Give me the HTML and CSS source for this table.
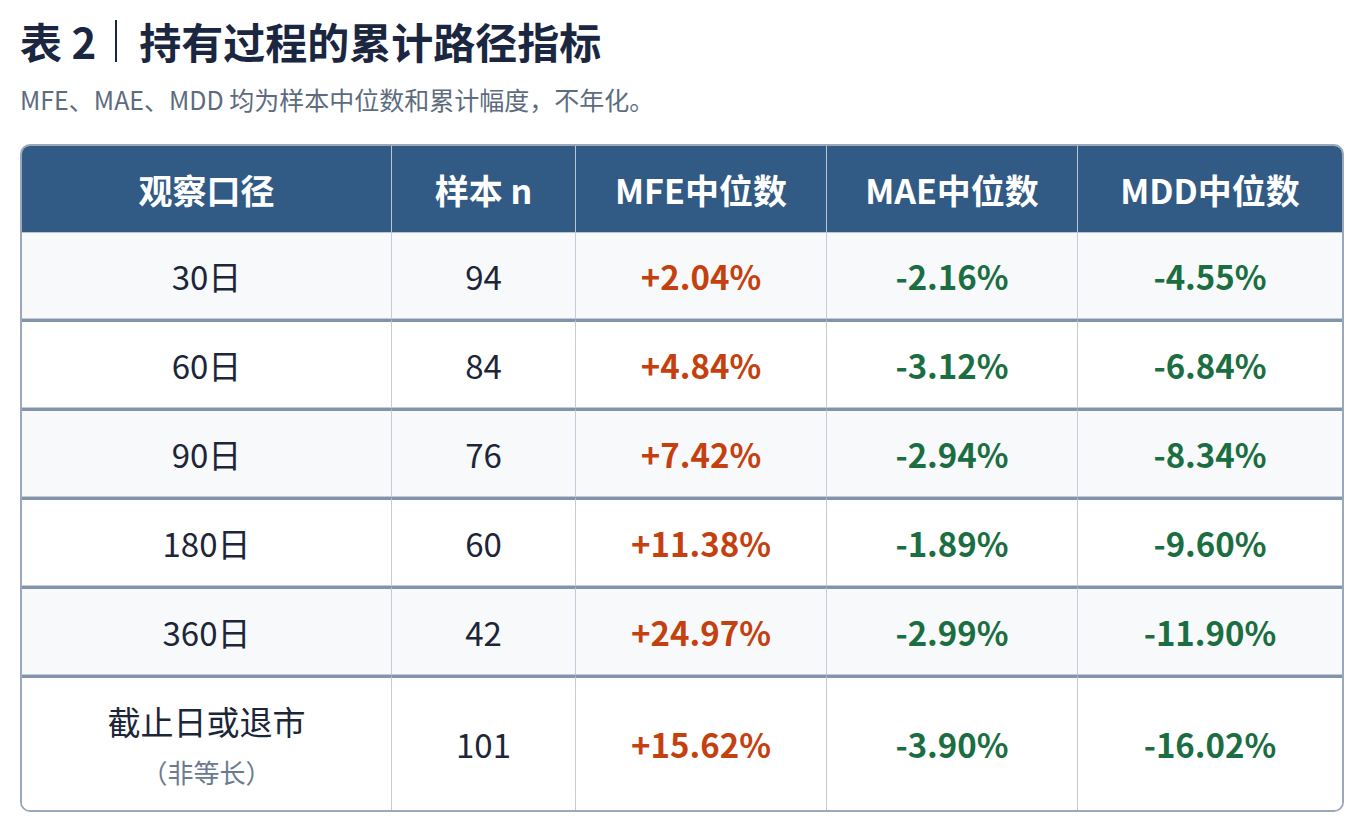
FILE: index.html
```html
<!DOCTYPE html>
<html lang="zh-CN">
<head>
<meta charset="utf-8">
<title>表 2｜持有过程的累计路径指标</title>
<link rel="stylesheet" href="styles.css">
</head>
<body>
<main class="page">
  <h1 class="title">表 2<span class="sep"></span>持有过程的累计路径指标</h1>
  <p class="subtitle">MFE、MAE、MDD 均为样本中位数和累计幅度，不年化。</p>
  <div class="table-wrap">
    <table class="data">
      <colgroup>
        <col class="c1"><col class="c2"><col class="c3"><col class="c4"><col class="c5">
      </colgroup>
      <thead>
        <tr><th>观察口径</th><th>样本 n</th><th>MFE中位数</th><th>MAE中位数</th><th>MDD中位数</th></tr>
      </thead>
      <tbody>
        <tr class="odd"><td>30日</td><td>94</td><td class="pos">+2.04%</td><td class="neg">-2.16%</td><td class="neg">-4.55%</td></tr>
        <tr><td>60日</td><td>84</td><td class="pos">+4.84%</td><td class="neg">-3.12%</td><td class="neg">-6.84%</td></tr>
        <tr class="odd"><td>90日</td><td>76</td><td class="pos">+7.42%</td><td class="neg">-2.94%</td><td class="neg">-8.34%</td></tr>
        <tr><td>180日</td><td>60</td><td class="pos">+11.38%</td><td class="neg">-1.89%</td><td class="neg">-9.60%</td></tr>
        <tr class="odd"><td>360日</td><td>42</td><td class="pos">+24.97%</td><td class="neg">-2.99%</td><td class="neg">-11.90%</td></tr>
        <tr class="last"><td><div class="main">截止日或退市</div><div class="note">（非等长）</div></td><td>101</td><td class="pos">+15.62%</td><td class="neg">-3.90%</td><td class="neg">-16.02%</td></tr>
      </tbody>
    </table>
  </div>
</main>
</body>
</html>
```

FILE: styles.css
```css
* { box-sizing: border-box; }
html, body { margin: 0; padding: 0; background: #ffffff; }
body {
  font-family: "Noto Sans CJK SC", "Noto Sans", sans-serif;
  color: #1c2638;
}
.page {
  padding: 12px 20px 0 20px;
  width: 1364px;
}
.title {
  margin: 0;
  font-size: 42px;
  line-height: 58px;
  font-weight: 700;
  color: #1b2740;
  display: flex;
  align-items: center;
}
.sep {
  display: inline-block;
  width: 2px;
  height: 42px;
  background: #1b2740;
  margin: 0 22px 0 19px;
}
.subtitle {
  margin: 12px 0 0 0;
  font-size: 25px;
  line-height: 34px;
  color: #5d6b7e;
}
.table-wrap {
  margin-top: 28px;
  border: 2px solid #9aa8ba;
  border-radius: 10px;
  overflow: hidden;
  width: 1324px;
}
.data {
  width: 1320px;
  border-collapse: separate;
  border-spacing: 0;
  table-layout: fixed;
}
.c1 { width: 370px; }
.c2 { width: 184px; }
.c3 { width: 251px; }
.c4 { width: 251px; }
.c5 { width: 264px; }
.data th {
  background: #315a85;
  color: #ffffff;
  font-size: 34px;
  font-weight: 700;
  height: 87px;
  padding: 0;
  border-right: 1px solid #b9c6d6;
  border-bottom: 1px solid #b9c6d6;
  text-align: center;
  vertical-align: middle;
}
.data th:last-child { border-right: none; }
.data td {
  font-size: 33px;
  line-height: 44px;
  text-align: center;
  vertical-align: middle;
  height: 89px;
  padding: 0;
  color: #1c2638;
  border-right: 1px solid #c2cbd7;
  border-bottom: 1px solid #c2cbd7;
  border-top: 3px solid #8294aa;
  background: #ffffff;
}
.data tbody tr:first-child td { border-top: none; height: 86px; }
.data td:last-child { border-right: none; }
.data tr.odd td { background: #f7f9fb; }
.data tr.last td { height: 135px; border-bottom: none; }
.data td.pos { color: #c4410f; font-weight: 700; }
.data td.neg { color: #1a6e42; font-weight: 700; }
.main { line-height: 44px; }
.note {
  font-size: 26px;
  line-height: 34px;
  color: #6b7a8f;
  margin-top: 12px;
}
```
